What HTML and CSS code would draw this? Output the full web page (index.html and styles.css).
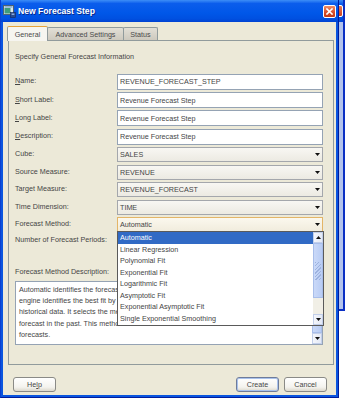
FILE: index.html
```html
<!DOCTYPE html>
<html>
<head>
<meta charset="utf-8">
<link rel="stylesheet" href="styles.css">
</head>
<body>
<div class="desktop">
  <div class="backwin">
    <div class="back-title"><span class="back-close"></span></div>
    <div class="back-body"></div>
  </div>

  <div class="dialog">
    <div class="titlebar">
      <svg class="appicon" width="13" height="13" viewBox="0 0 13 13">
        <rect x="0.5" y="0.5" width="10" height="9" fill="#DCE6EC" stroke="#4E6272"/>
        <rect x="1.5" y="3" width="6" height="5.5" fill="#3E9C7C"/>
        <rect x="1.5" y="1.2" width="8" height="1.4" fill="#7FA7C9"/>
        <rect x="7.5" y="7.5" width="5" height="5" fill="#2A4C8E" stroke="#16285A" stroke-width="0.6"/>
        <rect x="8.6" y="8.6" width="2.8" height="1.2" fill="#9FC1F0"/>
      </svg>
      <span class="title">New Forecast Step</span>
      <span class="close">
        <svg width="7" height="7" viewBox="0 0 7 7"><path d="M1 1 L6 6 M6 1 L1 6" stroke="#fff" stroke-width="1.6" stroke-linecap="square"/></svg>
      </span>
    </div>

    <div class="client">
      <div class="tabs">
        <div class="tab active w-gen">General</div>
        <div class="tab w-adv">Advanced Settings</div>
        <div class="tab w-sta">Status</div>
      </div>

      <div class="panel">
        <div class="heading">Specify General Forecast Information</div>

        <div class="form">
          <div class="row">
            <span class="lbl"><u>N</u>ame:</span>
            <div class="txt">REVENUE_FORECAST_STEP</div>
          </div>
          <div class="row">
            <span class="lbl"><u>S</u>hort Label:</span>
            <div class="txt">Revenue Forecast Step</div>
          </div>
          <div class="row">
            <span class="lbl"><u>L</u>ong Label:</span>
            <div class="txt">Revenue Forecast Step</div>
          </div>
          <div class="row">
            <span class="lbl"><u>D</u>escription:</span>
            <div class="txt">Revenue Forecast Step</div>
          </div>
          <div class="row crow">
            <span class="lbl">Cube:</span>
            <div class="combo"><span>SALES</span><svg class="arr" width="5" height="3" viewBox="0 0 5 3"><path d="M0 0H5L2.5 3Z" fill="#111"/></svg></div>
          </div>
          <div class="row crow">
            <span class="lbl">Source Measure:</span>
            <div class="combo"><span>REVENUE</span><svg class="arr" width="5" height="3" viewBox="0 0 5 3"><path d="M0 0H5L2.5 3Z" fill="#111"/></svg></div>
          </div>
          <div class="row crow">
            <span class="lbl">Target Measure:</span>
            <div class="combo"><span>REVENUE_FORECAST</span><svg class="arr" width="5" height="3" viewBox="0 0 5 3"><path d="M0 0H5L2.5 3Z" fill="#111"/></svg></div>
          </div>
          <div class="row crow">
            <span class="lbl">Time Dimension:</span>
            <div class="combo"><span>TIME</span><svg class="arr" width="5" height="3" viewBox="0 0 5 3"><path d="M0 0H5L2.5 3Z" fill="#111"/></svg></div>
          </div>
          <div class="row crow">
            <span class="lbl">Forecast Method:</span>
            <div class="combo focus"><span>Automatic</span><svg class="arr" width="5" height="3" viewBox="0 0 5 3"><path d="M0 0H5L2.5 3Z" fill="#111"/></svg>
              <div class="popup">
                <div class="items">
                  <div class="item sel">Automatic</div>
                  <div class="item">Linear Regression</div>
                  <div class="item">Polynomial Fit</div>
                  <div class="item">Exponential Fit</div>
                  <div class="item">Logarithmic Fit</div>
                  <div class="item">Asymptotic Fit</div>
                  <div class="item">Exponential Asymptotic Fit</div>
                  <div class="item">Single Exponential Smoothing</div>
                </div>
                <div class="vscroll">
                  <div class="sbtn"><svg width="5" height="3" viewBox="0 0 5 3"><path d="M0 3H5L2.5 0Z" fill="#111"/></svg></div>
                  <div class="thumb big"><span class="grip"></span></div>
                  <div class="track"></div>
                  <div class="sbtn"><svg width="5" height="3" viewBox="0 0 5 3"><path d="M0 0H5L2.5 3Z" fill="#111"/></svg></div>
                </div>
              </div>
            </div>
          </div>
          <div class="row nrow">
            <span class="lbl">Number of Forecast Periods:</span>
          </div>
        </div>

        <div class="desc-label">Forecast Method Description:</div>
        <div class="desc">
          <div class="desc-text">Automatic identifies the forecast method that the forecasting<br>engine identifies the best fit by analyzing the performance on<br>historical data. It selects the method that would have produced the best<br>forecast in the past. This method is recommended for most new<br>forecasts.</div>
          <div class="vscroll small">
            <div class="sbtn"><svg width="5" height="3" viewBox="0 0 5 3"><path d="M0 3H5L2.5 0Z" fill="#111"/></svg></div>
            <div class="thumb fill"></div>
            <div class="sbtn"><svg width="5" height="3" viewBox="0 0 5 3"><path d="M0 0H5L2.5 3Z" fill="#111"/></svg></div>
          </div>
        </div>
      </div>

      <div class="buttons">
        <button class="btn">He<u>l</u>p</button>
        <span class="spacer"></span>
        <button class="btn default">Create</button>
        <button class="btn">Cancel</button>
      </div>
    </div>
  </div>
</div>
</body>
</html>
```

FILE: styles.css
```css
* { box-sizing: border-box; }
html, body { margin: 0; padding: 0; background: #fff; }
body {
  font-family: "Liberation Sans", Arial, sans-serif;
  font-size: 7.2px;
  color: #454545;
}
.desktop {
  position: relative;
  width: 348px;
  height: 400px;
  overflow: hidden;
  background: #fff;
}

/* window behind */
.backwin {
  position: absolute;
  left: 200px;
  top: 0;
  width: 145px;
  height: 311px;
  background: #B3C3EC;
  border-right: 2px solid #0A2FC4;
  border-bottom: 2px solid #0A2FC4;
  display: flex;
  flex-direction: column;
}
.back-title {
  position: relative;
  height: 22px;
  background: linear-gradient(#3C8CF6 0%, #0A5BEB 18%, #0055E5 70%, #0046D6 100%);
}
.back-close {
  position: absolute;
  right: 0;
  top: 5px;
  width: 13px;
  height: 12px;
  border: 1px solid #fff;
  border-radius: 2px;
  background: linear-gradient(#E87A55, #CF4220);
}
.back-body { flex: 1; }

/* main dialog */
.dialog {
  position: absolute;
  left: 0;
  top: 0;
  width: 339px;
  height: 398px;
  background: #0A55DF;
  border-left: 1px solid #0A3FD0;
  border-right: 1px solid #001C9C;
  border-bottom: 1px solid #001C9C;
  display: flex;
  flex-direction: column;
}
.titlebar {
  height: 22px;
  flex: none;
  display: flex;
  align-items: center;
  padding: 0 2px 0 2px;
  background: linear-gradient(#3D8EF7 0%, #0B5DEC 16%, #0057E8 60%, #0050E0 85%, #0042D2 100%);
}
.appicon { flex: none; margin-right: 1px; margin-top: 1px; }
.title {
  flex: 1;
  color: #fff;
  font-weight: bold;
  font-size: 8.6px;
  text-shadow: 1px 1px 0 #0A2A8A;
  padding-left: 1px;
}
.close {
  width: 13px;
  height: 13px;
  border: 1px solid #fff;
  border-radius: 2px;
  background: linear-gradient(#EE8E68, #D8502C 55%, #C23A16);
  display: flex;
  align-items: center;
  justify-content: center;
}

.client {
  flex: 1;
  margin: 0 2px 2px 2px;
  background: #ECE9D8;
  padding: 4px 2px 3px 4px;
  display: flex;
  flex-direction: column;
}

/* tabs */
.tabs {
  height: 14px;
  display: flex;
  align-items: flex-end;
  position: relative;
  z-index: 1;
}
.tab {
  height: 13px;
  border: 1px solid #919B9C;
  border-bottom: none;
  border-radius: 2px 2px 0 0;
  background: linear-gradient(#E2DFD6, #CDC9BE);
  color: #4A4A4A;
  display: flex;
  align-items: center;
  justify-content: center;
  margin-left: -1px;
}
.tab.active {
  height: 15px;
  margin-bottom: -1px;
  background: #F6F5F0;
  border-top: 1px solid #E6A23A;
  margin-left: 0;
  padding-top: 1px;
}
.w-gen { width: 41px; }
.w-adv { width: 77px; }
.w-sta { width: 35px; }

.panel {
  margin-left: 1px;
  width: 326px;
  height: 325px;
  border: 1px solid #919B9C;
  background: #ECE9D8;
  padding: 10px 10px 0 6px;
}
.heading {
  height: 11.4px;
  line-height: 11.4px;
}
.form { margin-top: 11.6px; }
.row {
  display: flex;
  align-items: center;
  height: 16px;
  margin-bottom: 2.25px;
}
.row.crow {
  height: 15px;
  margin-bottom: 2.6px;
}
.row.nrow {
  height: 11px;
  margin-bottom: 0;
}
.lbl {
  width: 102px;
  flex: none;
  line-height: 11px;
  margin-bottom: 2px;
}
.txt {
  width: 206px;
  height: 16px;
  border: 1px solid #95A3B4;
  background: #fff;
  padding-left: 2px;
  display: flex;
  align-items: center;
  white-space: nowrap;
}
.combo {
  position: relative;
  width: 206px;
  height: 15px;
  border: 1px solid #A4A7AC;
  background: linear-gradient(#F8F7F3, #ECEAE2);
  padding: 0 2px 0 2px;
  display: flex;
  align-items: center;
  justify-content: space-between;
  white-space: nowrap;
}
.combo.focus {
  border-color: #E3B567;
  background: linear-gradient(#FBF8EE, #F1ECDD);
}
.arr { flex: none; }

/* popup list */
.popup {
  position: absolute;
  left: -1px;
  top: 13px;
  width: 207px;
  height: 95px;
  border: 1px solid #5A5A5A;
  background: #fff;
  display: flex;
  z-index: 5;
}
.items { flex: 1; }
.item {
  height: 11.5px;
  line-height: 11.5px;
  padding-left: 2px;
  white-space: nowrap;
}
.item.sel {
  background: #316AC5;
  color: #fff;
}
.vscroll {
  width: 10px;
  flex: none;
  display: flex;
  flex-direction: column;
  background: #F2F0E8;
}
.sbtn {
  height: 11px;
  flex: none;
  background: linear-gradient(90deg, #F4F6FB, #E3E9F6);
  border: 1px solid #C2CFEA;
  display: flex;
  align-items: center;
  justify-content: center;
}
.thumb {
  background: linear-gradient(90deg, #CAD9F8, #B8CCF4);
  border: 1px solid #A8BEEA;
  display: flex;
  align-items: center;
  justify-content: center;
}
.thumb.big { height: 55px; flex: none; }
.thumb.fill { flex: 1; }
.track { flex: 1; background: #F1EFE6; }
.grip {
  width: 6px;
  height: 18px;
  background: repeating-linear-gradient(135deg, #9DB2DE 0 1px, transparent 1px 2.5px);
}

.desc-label {
  margin-top: 20px;
  height: 11px;
  line-height: 11px;
}
.desc {
  margin-top: 4px;
  width: 308px;
  height: 64px;
  border: 1px solid #95A3B4;
  background: #fff;
  display: flex;
}
.desc-text {
  flex: 1;
  overflow: hidden;
  white-space: nowrap;
  padding: 2px 3px;
  line-height: 11.2px;
}

/* buttons */
.buttons {
  margin-top: 12px;
  height: 15px;
  display: flex;
  padding: 0 7px 0 6px;
  gap: 5px;
}
.spacer { flex: 1; }
.btn {
  width: 43px;
  height: 15px;
  padding: 0;
  font-family: "Liberation Sans", Arial, sans-serif;
  font-size: 7.2px;
  color: #454545;
  border: 1px solid #8A8A86;
  border-radius: 3px;
  background: linear-gradient(#FFFFFF, #F4F3EE 70%, #DCD8CC);
}
.btn.default {
  border-color: #6F7C9A;
  box-shadow: inset 0 0 0 1px #A9C2EC;
}
```
